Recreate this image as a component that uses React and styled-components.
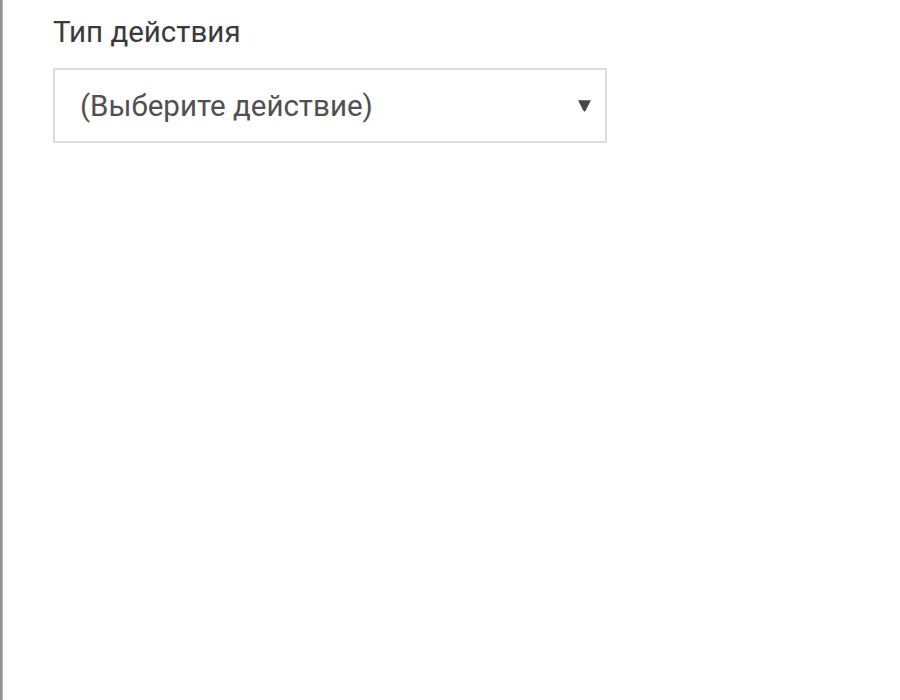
import React from "react";
import styled, { createGlobalStyle } from "styled-components";

const GlobalStyle = createGlobalStyle`
    html, body {
        margin: 0;
        padding: 0;
        background: #ffffff;
        height: 100%;
    }
    #root {
        height: 100%;
    }
`;

const App = () => {
    return (
        <>
            <GlobalStyle />
            <Page>
                <Edge />
                <Form>
                    <Label>Тип действия</Label>
                    <Select>
                        <Placeholder>(Выберите действие)</Placeholder>
                        <Arrow viewBox="0 0 14 14">
                            <path d="M1 2 H13 L8 12 Q7 13.5 6 12 Z" />
                        </Arrow>
                    </Select>
                </Form>
            </Page>
        </>
    );
};

const Page = styled.div`
    display: flex;
    height: 700px;
    width: 900px;
    background: #ffffff;
    font-family: Roboto, "Liberation Sans", sans-serif;
`;

const Edge = styled.div`
    width: 3px;
    flex-shrink: 0;
    background: linear-gradient(to right, #8a8a8a, #9a9a9a 60%, #c8c8c8);
`;

const Form = styled.div`
    display: flex;
    flex-direction: column;
    padding: 12px 0 0 50px;
`;

const Label = styled.div`
    font-size: 29.5px;
    color: #3a3a3a;
    line-height: 40px;
    margin-bottom: 16px;
`;

const Select = styled.div`
    display: flex;
    align-items: center;
    justify-content: space-between;
    box-sizing: border-box;
    width: 554px;
    height: 75px;
    padding: 0 13px 0 25px;
    border: 2px solid #dcdcdc;
    background: #ffffff;
`;

const Placeholder = styled.span`
    font-size: 29.5px;
    color: #505050;
`;

const Arrow = styled.svg`
    width: 15px;
    height: 15px;
    fill: #454545;
`;

export default App;
